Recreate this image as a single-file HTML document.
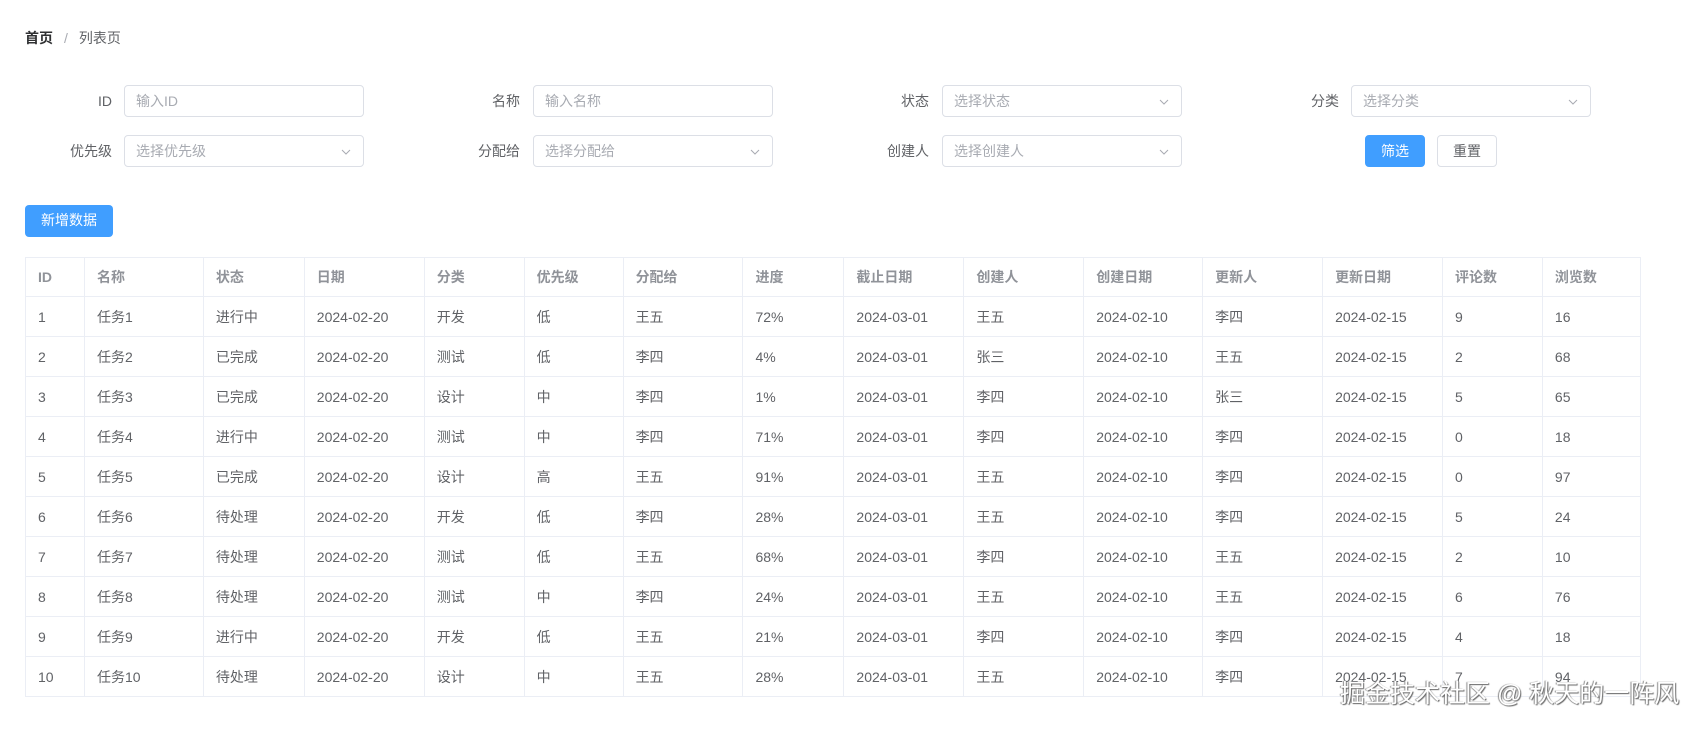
<!DOCTYPE html>
<html><head><meta charset="utf-8"><style>
*{box-sizing:border-box;margin:0;padding:0}
body{width:1697px;height:735px;background:#fff;font-family:"Liberation Sans","Noto Sans CJK SC",sans-serif;font-size:14px;color:#606266;position:relative;overflow:hidden}
.abs{position:absolute}
.bc{left:25px;top:28px;font-size:14px;line-height:20px}
.bc b{color:#303133;font-weight:bold}
.bc .s{color:#a8abb2;margin:0 11px}
.lbl{text-align:right;width:100px;line-height:32px;color:#606266}
.inp{height:32px;width:240px;border:1px solid #dcdfe6;border-radius:4px;color:#a8abb2;padding-left:11px;line-height:30px;font-size:14px}
.inp svg{position:absolute;right:12px;top:11px}
.btn{height:32px;border-radius:4px;text-align:center;line-height:30px;font-size:14px}
table{position:absolute;left:25px;top:257px;width:1616px;border-collapse:collapse;border:1px solid #ebeef5}
td,th{border:1px solid #ebeef5;text-align:left;padding:0 12px;height:40px;font-weight:normal}
th{height:39px;color:#909399;font-weight:bold}
.wm{left:1340px;top:674px;font-size:25px;color:#fff;text-shadow:1px 1px 1px #666,-1px 0 1px #888;white-space:nowrap}
</style></head><body>
<div class="abs bc"><b>首页</b><span class="s">/</span>列表页</div>

<div class="abs lbl" style="left:12px;top:85px">ID</div>
<div class="abs inp" style="left:124px;top:85px">输入ID</div>
<div class="abs lbl" style="left:420px;top:85px">名称</div>
<div class="abs inp" style="left:533px;top:85px">输入名称</div>
<div class="abs lbl" style="left:829px;top:85px">状态</div>
<div class="abs inp" style="left:942px;top:85px">选择状态<svg width="10" height="10" viewBox="0 0 10 10"><path d="M1 3l4 4 4-4" fill="none" stroke="#a8abb2" stroke-width="1"/></svg></div>
<div class="abs lbl" style="left:1239px;top:85px">分类</div>
<div class="abs inp" style="left:1351px;top:85px">选择分类<svg width="10" height="10" viewBox="0 0 10 10"><path d="M1 3l4 4 4-4" fill="none" stroke="#a8abb2" stroke-width="1"/></svg></div>

<div class="abs lbl" style="left:12px;top:135px">优先级</div>
<div class="abs inp" style="left:124px;top:135px">选择优先级<svg width="10" height="10" viewBox="0 0 10 10"><path d="M1 3l4 4 4-4" fill="none" stroke="#a8abb2" stroke-width="1"/></svg></div>
<div class="abs lbl" style="left:420px;top:135px">分配给</div>
<div class="abs inp" style="left:533px;top:135px">选择分配给<svg width="10" height="10" viewBox="0 0 10 10"><path d="M1 3l4 4 4-4" fill="none" stroke="#a8abb2" stroke-width="1"/></svg></div>
<div class="abs lbl" style="left:829px;top:135px">创建人</div>
<div class="abs inp" style="left:942px;top:135px">选择创建人<svg width="10" height="10" viewBox="0 0 10 10"><path d="M1 3l4 4 4-4" fill="none" stroke="#a8abb2" stroke-width="1"/></svg></div>
<div class="abs btn" style="left:1365px;top:135px;width:60px;background:#409eff;color:#fff;border:1px solid #409eff">筛选</div>
<div class="abs btn" style="left:1437px;top:135px;width:60px;background:#fff;color:#606266;border:1px solid #dcdfe6">重置</div>

<div class="abs btn" style="left:25px;top:205px;width:88px;background:#409eff;color:#fff">新增数据</div>

<table>
<colgroup><col style="width:59px"><col style="width:119px"><col style="width:101px"><col style="width:120px"><col style="width:100px"><col style="width:99px"><col style="width:120px"><col style="width:101px"><col style="width:120px"><col style="width:120px"><col style="width:119px"><col style="width:120px"><col style="width:120px"><col style="width:100px"><col style="width:98px"></colgroup>
<tr><th>ID</th><th>名称</th><th>状态</th><th>日期</th><th>分类</th><th>优先级</th><th>分配给</th><th>进度</th><th>截止日期</th><th>创建人</th><th>创建日期</th><th>更新人</th><th>更新日期</th><th>评论数</th><th>浏览数</th></tr>
<tr><td>1</td><td>任务1</td><td>进行中</td><td>2024-02-20</td><td>开发</td><td>低</td><td>王五</td><td>72%</td><td>2024-03-01</td><td>王五</td><td>2024-02-10</td><td>李四</td><td>2024-02-15</td><td>9</td><td>16</td></tr>
<tr><td>2</td><td>任务2</td><td>已完成</td><td>2024-02-20</td><td>测试</td><td>低</td><td>李四</td><td>4%</td><td>2024-03-01</td><td>张三</td><td>2024-02-10</td><td>王五</td><td>2024-02-15</td><td>2</td><td>68</td></tr>
<tr><td>3</td><td>任务3</td><td>已完成</td><td>2024-02-20</td><td>设计</td><td>中</td><td>李四</td><td>1%</td><td>2024-03-01</td><td>李四</td><td>2024-02-10</td><td>张三</td><td>2024-02-15</td><td>5</td><td>65</td></tr>
<tr><td>4</td><td>任务4</td><td>进行中</td><td>2024-02-20</td><td>测试</td><td>中</td><td>李四</td><td>71%</td><td>2024-03-01</td><td>李四</td><td>2024-02-10</td><td>李四</td><td>2024-02-15</td><td>0</td><td>18</td></tr>
<tr><td>5</td><td>任务5</td><td>已完成</td><td>2024-02-20</td><td>设计</td><td>高</td><td>王五</td><td>91%</td><td>2024-03-01</td><td>王五</td><td>2024-02-10</td><td>李四</td><td>2024-02-15</td><td>0</td><td>97</td></tr>
<tr><td>6</td><td>任务6</td><td>待处理</td><td>2024-02-20</td><td>开发</td><td>低</td><td>李四</td><td>28%</td><td>2024-03-01</td><td>王五</td><td>2024-02-10</td><td>李四</td><td>2024-02-15</td><td>5</td><td>24</td></tr>
<tr><td>7</td><td>任务7</td><td>待处理</td><td>2024-02-20</td><td>测试</td><td>低</td><td>王五</td><td>68%</td><td>2024-03-01</td><td>李四</td><td>2024-02-10</td><td>王五</td><td>2024-02-15</td><td>2</td><td>10</td></tr>
<tr><td>8</td><td>任务8</td><td>待处理</td><td>2024-02-20</td><td>测试</td><td>中</td><td>李四</td><td>24%</td><td>2024-03-01</td><td>王五</td><td>2024-02-10</td><td>王五</td><td>2024-02-15</td><td>6</td><td>76</td></tr>
<tr><td>9</td><td>任务9</td><td>进行中</td><td>2024-02-20</td><td>开发</td><td>低</td><td>王五</td><td>21%</td><td>2024-03-01</td><td>李四</td><td>2024-02-10</td><td>李四</td><td>2024-02-15</td><td>4</td><td>18</td></tr>
<tr><td>10</td><td>任务10</td><td>待处理</td><td>2024-02-20</td><td>设计</td><td>中</td><td>王五</td><td>28%</td><td>2024-03-01</td><td>王五</td><td>2024-02-10</td><td>李四</td><td>2024-02-15</td><td>7</td><td>94</td></tr>
</table>
<div class="abs wm">掘金技术社区 @ 秋天的一阵风</div>
</body></html>
